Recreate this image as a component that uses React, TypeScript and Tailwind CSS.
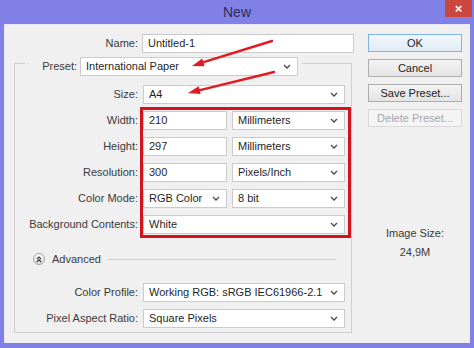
import React from "react";

const Chevron = () => (
  <svg width="8" height="5" viewBox="0 0 8 5" className="shrink-0">
    <path d="M1 1 L4 4 L7 1" fill="none" stroke="#4a4a4a" strokeWidth="1.3" />
  </svg>
);

const Select = ({ value, w }: { value: string; w: string }) => (
  <div
    className={`${w} h-[19px] bg-white border border-[#cbcbcb] flex items-center justify-between pl-[5px] pr-[6px] text-[#1f1f1f] whitespace-nowrap overflow-hidden`}
  >
    <span>{value}</span>
    <Chevron />
  </div>
);

const Input = ({ value, w }: { value: string; w: string }) => (
  <div
    className={`${w} h-[19px] bg-white border border-[#cbcbcb] flex items-center pl-[5px] text-[#1f1f1f] whitespace-nowrap`}
  >
    {value}
  </div>
);

const Label = ({ children }: { children: React.ReactNode }) => (
  <div className="w-[123px] shrink-0 text-right text-[#3a3a3a] whitespace-nowrap">{children}</div>
);

const Btn = ({ children, variant }: { children: React.ReactNode; variant?: "default" | "disabled" }) => {
  const cls =
    variant === "default"
      ? "border-[#7eb4ea] bg-gradient-to-b from-[#f1f6fb] to-[#e2ecf6] text-[#222]"
      : variant === "disabled"
      ? "border-[#d9d9d9] bg-[#f4f4f4] text-[#a6a6a6]"
      : "border-[#adadad] bg-gradient-to-b from-[#f3f3f3] to-[#e4e4e4] text-[#222]";
  return (
    <div className={`w-[94px] h-[18px] border ${cls} flex items-center justify-center whitespace-nowrap`}>
      {children}
    </div>
  );
};

export default function App() {
  return (
    <div className="relative w-[474px] h-[348px] bg-[#8080e6] flex flex-col overflow-hidden font-['Liberation_Sans',Arial,sans-serif] text-[11px] leading-[13px]">
      {/* Title bar */}
      <div className="h-[24px] shrink-0 flex items-center justify-center relative">
        <span className="text-[14px] text-[#2e2e5c] leading-none">New</span>
        <div className="absolute right-[2px] top-0 w-[27px] h-[17px] bg-[#c9473d] flex items-center justify-center text-white text-[13px] font-bold leading-none">
          ×
        </div>
      </div>

      {/* Client area */}
      <div className="mx-[4px] h-[319px] bg-[#f0f0f0] border-l border-t border-[#e8e8f6] flex">
        {/* Left column */}
        <div className="pl-[9px] w-[350px] flex flex-col">
          {/* Name row */}
          <div className="mt-[9px] flex items-center">
            <div className="w-[124px] text-right text-[#3a3a3a]">Name:</div>
            <div className="ml-[4px]">
              <Input value="Untitled-1" w="w-[212px]" />
            </div>
          </div>

          {/* Group */}
          <fieldset className="mt-[-2px] w-[338px] border border-[#cfcfcf] pl-0 pr-[6px] pb-[4px] m-0">
            <legend className="ml-[10px] pt-[6px] pl-[4px] pr-[4px] flex items-center">
              <span className="w-[48px] text-right text-[#3a3a3a]">Preset:</span>
              <span className="ml-[3px]">
                <Select value="International Paper" w="w-[218px]" />
              </span>
            </legend>

            <div className="mt-[9px] flex flex-col gap-[7px]">
              <div className="flex items-center">
                <Label>Size:</Label>
                <div className="ml-[5px]">
                  <Select value="A4" w="w-[202px]" />
                </div>
              </div>
              <div className="flex items-center">
                <Label>Width:</Label>
                <div className="ml-[5px] flex gap-[5px]">
                  <Input value="210" w="w-[84px]" />
                  <Select value="Millimeters" w="w-[113px]" />
                </div>
              </div>
              <div className="flex items-center">
                <Label>Height:</Label>
                <div className="ml-[5px] flex gap-[5px]">
                  <Input value="297" w="w-[84px]" />
                  <Select value="Millimeters" w="w-[113px]" />
                </div>
              </div>
              <div className="flex items-center">
                <Label>Resolution:</Label>
                <div className="ml-[5px] flex gap-[5px]">
                  <Input value="300" w="w-[84px]" />
                  <Select value="Pixels/Inch" w="w-[113px]" />
                </div>
              </div>
              <div className="flex items-center">
                <Label>Color Mode:</Label>
                <div className="ml-[5px] flex gap-[5px]">
                  <Select value="RGB Color" w="w-[84px]" />
                  <Select value="8 bit" w="w-[113px]" />
                </div>
              </div>
              <div className="flex items-center">
                <Label>Background Contents:</Label>
                <div className="ml-[5px]">
                  <Select value="White" w="w-[202px]" />
                </div>
              </div>
            </div>

            {/* Advanced */}
            <div className="mt-[17px] h-[16px] flex items-center">
              <div className="ml-[18px] w-[12px] h-[12px] rounded-full border border-[#a0a0a0] bg-gradient-to-b from-white to-[#dedede] flex items-center justify-center">
                <svg width="6" height="7" viewBox="0 0 6 7">
                  <path d="M0.8 3.2 L3 1 L5.2 3.2 M0.8 6 L3 3.8 L5.2 6" fill="none" stroke="#333" strokeWidth="1.1" />
                </svg>
              </div>
              <span className="ml-[7px] text-[#3a3a3a]">Advanced</span>
              <div className="ml-[6px] mr-[9px] flex-1 h-px bg-[#d0d0d0]" />
            </div>

            <div className="mt-[16px] flex flex-col gap-[7px]">
              <div className="flex items-center">
                <Label>Color Profile:</Label>
                <div className="ml-[5px]">
                  <Select value="Working RGB:  sRGB IEC61966-2.1" w="w-[202px]" />
                </div>
              </div>
              <div className="flex items-center">
                <Label>Pixel Aspect Ratio:</Label>
                <div className="ml-[5px]">
                  <Select value="Square Pixels" w="w-[202px]" />
                </div>
              </div>
            </div>
          </fieldset>
        </div>

        {/* Right column */}
        <div className="ml-[13px] flex flex-col">
          <div className="mt-[9px] flex flex-col gap-[7px]">
            <Btn variant="default">OK</Btn>
            <Btn>Cancel</Btn>
            <Btn>Save Preset...</Btn>
            <Btn variant="disabled">Delete Preset...</Btn>
          </div>
          <div className="mt-[100px] w-[94px] flex flex-col items-center gap-[6px] text-[#3a3a3a]">
            <span>Image Size:</span>
            <span>24,9M</span>
          </div>
        </div>
      </div>

      {/* Annotation: red box */}
      <div className="absolute left-[140px] top-[107px] w-[211px] h-[131px] border-[3px] border-[#d3141c] pointer-events-none" />

      {/* Annotation: arrows */}
      <svg className="absolute inset-0 pointer-events-none" width="474" height="348" viewBox="0 0 474 348">
        <line x1="272" y1="41" x2="202" y2="62.7" stroke="#e21b23" strokeWidth="2.4" strokeLinecap="round" />
        <polygon points="192,66 204.6,66.2 202.2,58.6" fill="#e21b23" />
        <line x1="274" y1="72" x2="198" y2="90.6" stroke="#e21b23" strokeWidth="2.4" strokeLinecap="round" />
        <polygon points="188,93 200.6,94.1 198.7,86.3" fill="#e21b23" />
      </svg>
    </div>
  );
}
